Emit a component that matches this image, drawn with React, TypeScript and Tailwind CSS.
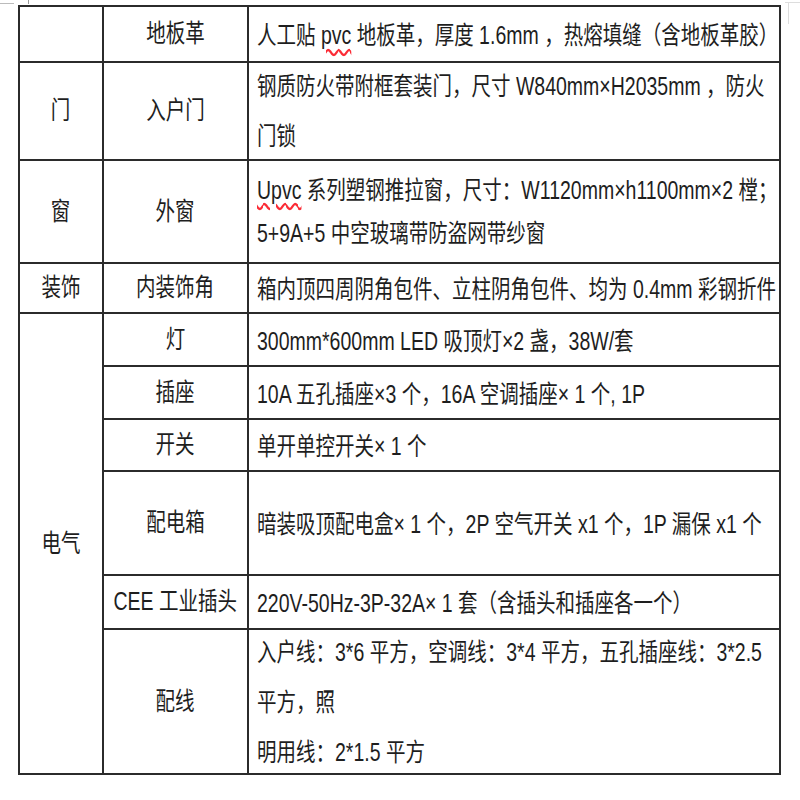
const FONT = "font-['Liberation_Sans','Noto_Sans_CJK_SC',sans-serif]"

type Row = {
  group?: string
  groupSpan?: number
  skipGroup?: boolean
  item: string
  h: string
  lh?: string
  content: React.ReactNode
}

const rows: Row[] = [
  {
    group: '',
    item: '地板革',
    h: 'h-[56px]',
    content: (
      <>
        人工贴{' '}
        <span className="underline decoration-wavy decoration-red-500 underline-offset-4">pvc</span> 地板革，厚度 1.6mm
        ，热熔填缝（含地板革胶）
      </>
    ),
  },
  {
    group: '门',
    item: '入户门',
    h: 'h-[98px]',
    lh: 'leading-[50px] -my-[6px]',
    content: (
      <>
        钢质防火带附框套装门，尺寸 W840mm×H2035mm ，防火
        <br />
        门锁
      </>
    ),
  },
  {
    group: '窗',
    item: '外窗',
    h: 'h-[103px]',
    lh: 'leading-[43px]',
    content: (
      <>
        <span className="underline decoration-wavy decoration-red-500 underline-offset-4">Upvc</span> 系列塑钢推拉窗，尺寸：W1120mm×h1100mm×2 樘；
        <br />
        5+9A+5 中空玻璃带防盗网带纱窗
      </>
    ),
  },
  {
    group: '装饰',
    item: '内装饰角',
    h: 'h-[50px]',
    content: '箱内顶四周阴角包件、立柱阴角包件、均为 0.4mm 彩钢折件',
  },
  { group: '电气', groupSpan: 7, item: '灯', h: 'h-[53px]', content: '300mm*600mm LED 吸顶灯×2 盏，38W/套' },
  { skipGroup: true, item: '插座', h: 'h-[53px]', content: '10A 五孔插座×3 个，16A 空调插座× 1 个, 1P' },
  { skipGroup: true, item: '开关', h: 'h-[52px]', content: '单开单控开关× 1 个' },
  {
    skipGroup: true,
    item: '配电箱',
    h: 'h-[104px]',
    content: '暗装吸顶配电盒× 1 个，2P 空气开关 x1 个，1P 漏保 x1 个',
  },
  {
    skipGroup: true,
    item: 'CEE 工业插头',
    h: 'h-[54px]',
    content: '220V-50Hz-3P-32A× 1 套（含插头和插座各一个）',
  },
  {
    skipGroup: true,
    item: '配线',
    h: 'h-[145px]',
    lh: 'leading-[50px] -my-[8px]',
    content: (
      <>
        入户线：3*6 平方，空调线：3*4 平方，五孔插座线：3*2.5
        <br />
        平方，照
        <br />
        明用线：2*1.5 平方
      </>
    ),
  },
]

// the scan has tall, squeezed glyphs: set a bigger size and narrow it
function Squeezed({
  children,
  center,
  className = '',
}: {
  children: React.ReactNode
  center?: boolean
  className?: string
}) {
  return (
    <span
      className={`inline-block align-middle whitespace-nowrap scale-x-[0.78] ${center ? 'origin-center' : 'origin-left'} ${className}`}
    >
      {children}
    </span>
  )
}

export default function App() {
  return (
    <div className={`relative w-[800px] h-[800px] overflow-hidden bg-white text-[#1e1e1e] ${FONT}`}>
      {/* scan leftovers at the top corners */}
      <div className="absolute left-0 top-[3px] w-[14px] h-px bg-[#bbb]" />
      <div className="absolute left-[28px] top-0 w-px h-[4px] bg-[#999]" />
      <div className="absolute left-[788px] top-[2px] w-px h-[22px] bg-[#ddd]" />
      <div className="absolute left-[785px] top-[2px] w-[15px] h-px bg-[#ddd]" />

      <div className="pt-[5px] pl-[18px]">
        <table className="w-[761px] table-fixed border-collapse border-2 border-[#2b2b2b] text-[25px]">
          <colgroup>
            <col className="w-[84px]" />
            <col className="w-[145px]" />
            <col className="w-[532px]" />
          </colgroup>
          <tbody>
            {rows.map((r) => (
              <tr key={r.item} className={r.h}>
                {!r.skipGroup && (
                  <td rowSpan={r.groupSpan ?? 1} className="border-2 border-[#2b2b2b] p-0 align-middle">
                    <div className="flex justify-center">
                      <Squeezed center>{r.group}</Squeezed>
                    </div>
                  </td>
                )}
                <td className="border-2 border-[#2b2b2b] p-0 align-middle">
                  <div className="flex justify-center">
                    <Squeezed center>{r.item}</Squeezed>
                  </div>
                </td>
                <td className="border-2 border-[#2b2b2b] py-0 pl-[8px] pr-0 text-left align-middle leading-[30px]">
                  <Squeezed className={r.lh ?? ''}>{r.content}</Squeezed>
                </td>
              </tr>
            ))}
          </tbody>
        </table>
      </div>
    </div>
  )
}
